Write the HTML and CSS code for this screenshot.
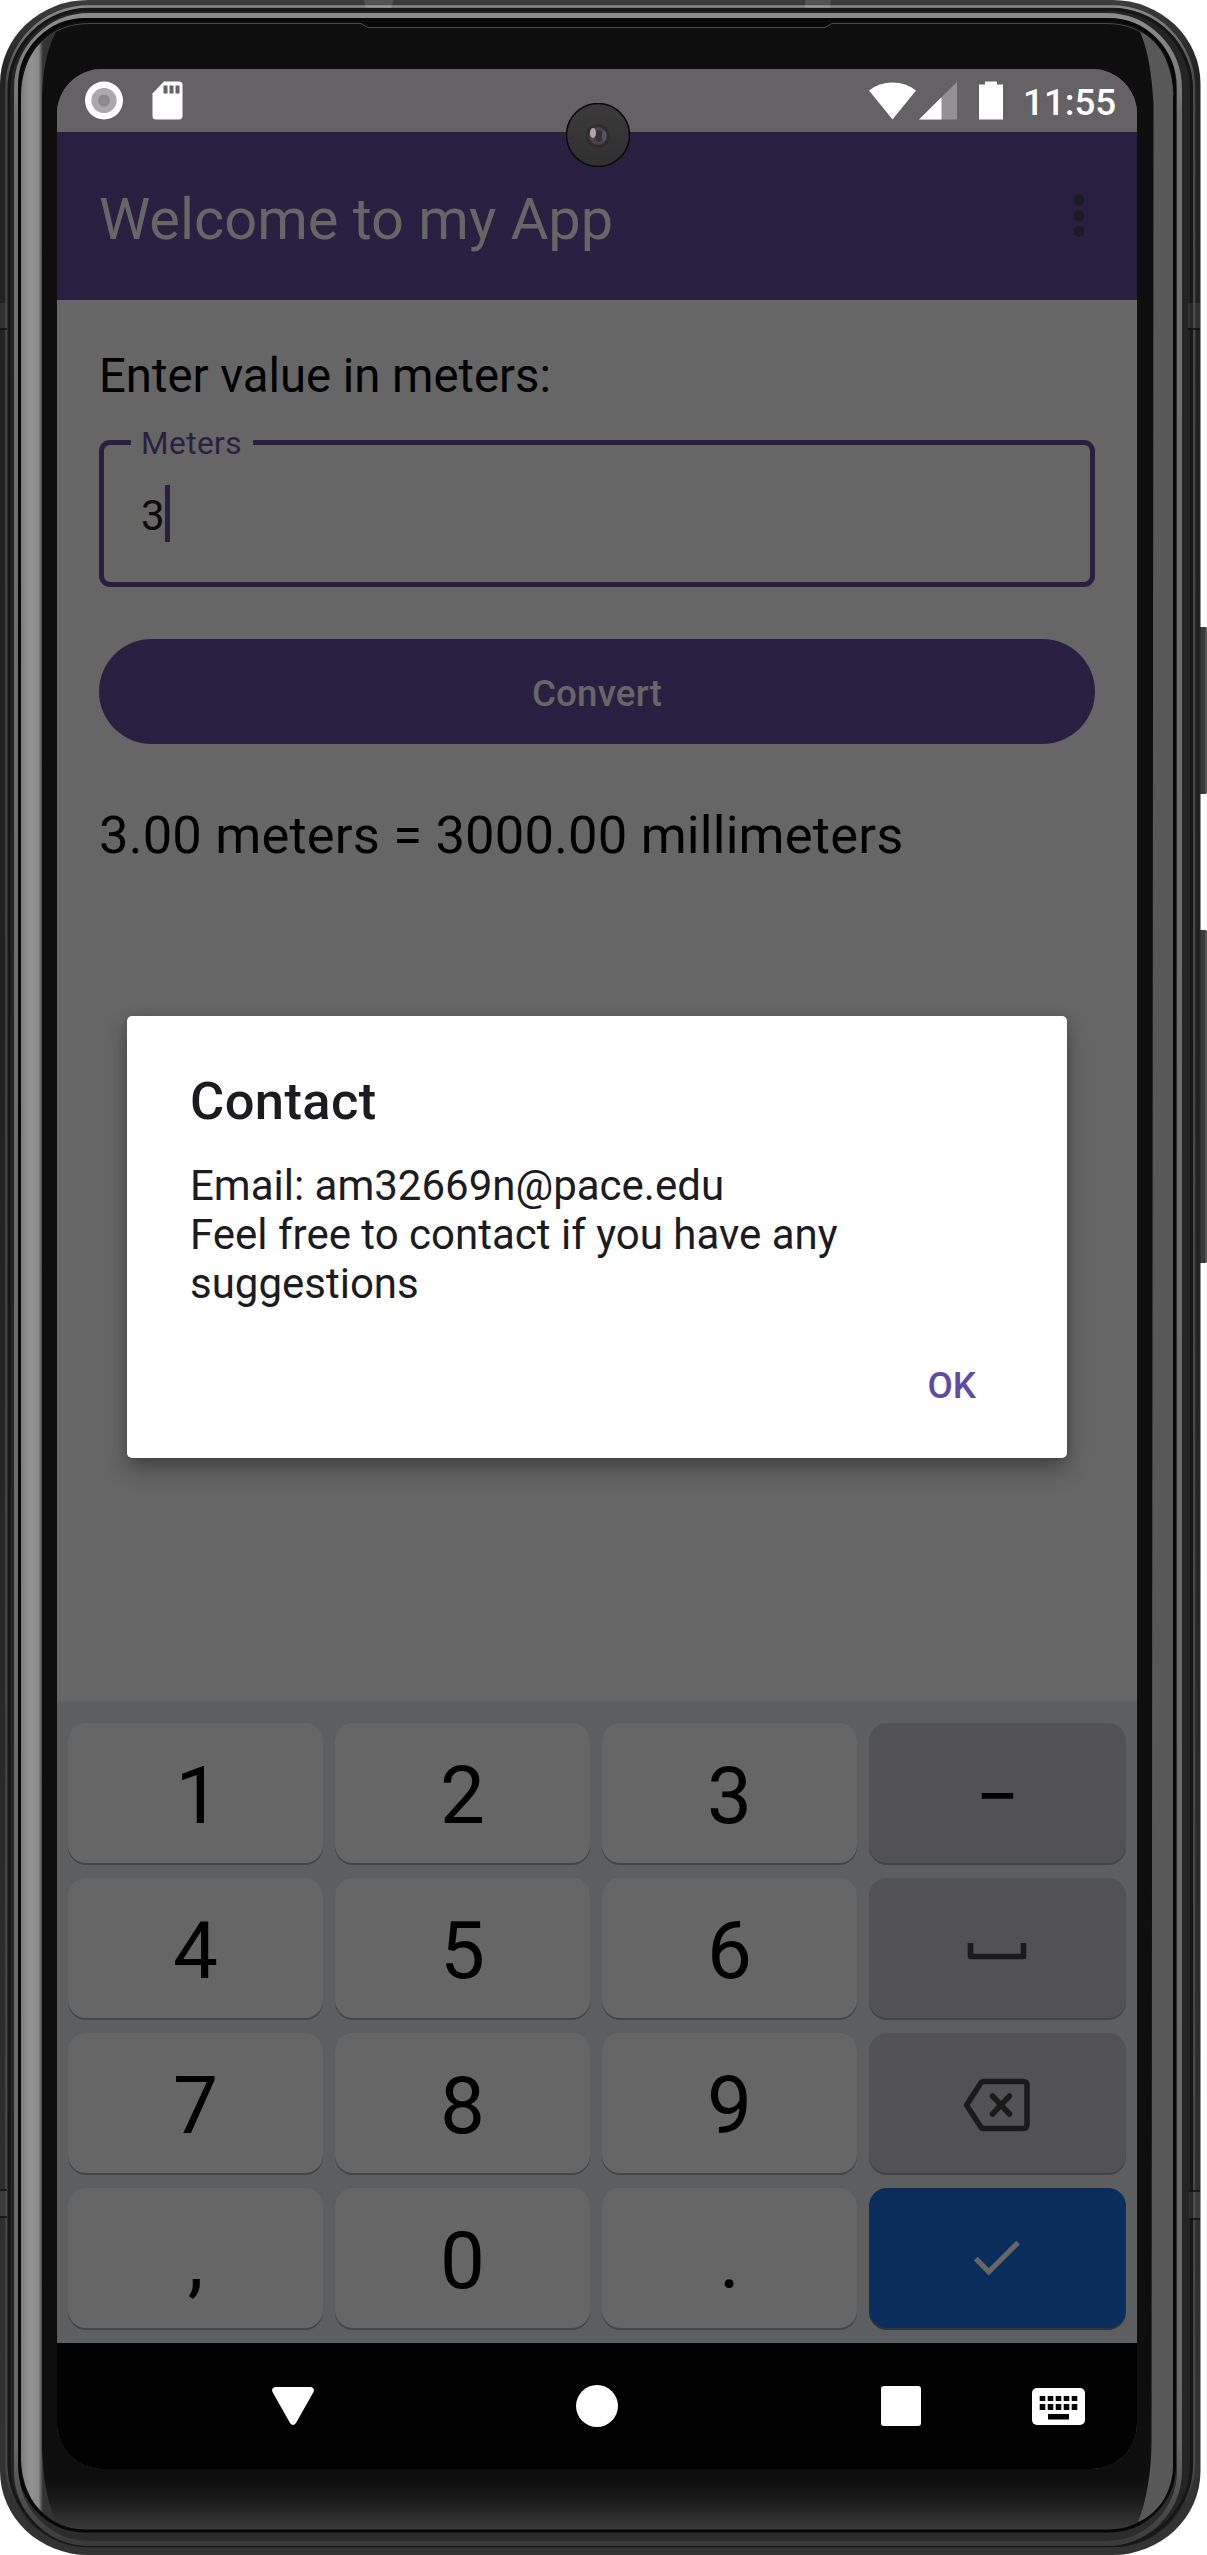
FILE: index.html
```html
<!DOCTYPE html>
<html lang="en">
<head>
<meta charset="utf-8">
<title>Welcome to my App</title>
<link rel="stylesheet" href="styles.css">
</head>
<body>
<div class="phone">
  <svg class="frame" viewBox="0 0 1207 2555" aria-hidden="true">
    <defs>
      <linearGradient id="edge" x1="0" y1="0" x2="0" y2="1"><stop offset="0" stop-color="#3c3c3c"/><stop offset=".03" stop-color="#222"/><stop offset=".4" stop-color="#202020"/><stop offset="1" stop-color="#333"/></linearGradient>
      <linearGradient id="ridge" x1="0" y1="0" x2="0" y2="1"><stop offset="0" stop-color="#8a8a8a"/><stop offset=".03" stop-color="#484848"/><stop offset=".97" stop-color="#484848"/><stop offset="1" stop-color="#161616"/></linearGradient>
      <linearGradient id="rim" x1="0" y1="0" x2="0" y2="1"><stop offset="0" stop-color="#8c8c8c"/><stop offset=".04" stop-color="#707070"/><stop offset=".96" stop-color="#686868"/><stop offset="1" stop-color="#3a3a3a"/></linearGradient>
      <linearGradient id="glass" x1="0" y1="22" x2="0" y2="2530" gradientUnits="userSpaceOnUse"><stop offset="0" stop-color="#0e0e0e"/><stop offset=".979" stop-color="#0e0e0e"/><stop offset=".988" stop-color="#191919"/><stop offset="1" stop-color="#3b3b3b"/></linearGradient>
      <linearGradient id="left" x1="21" y1="0" x2="43" y2="0" gradientUnits="userSpaceOnUse"><stop offset="0" stop-color="#7c7c7c"/><stop offset=".4" stop-color="#929292"/><stop offset=".8" stop-color="#8a8a8a"/><stop offset="1" stop-color="#333"/></linearGradient>
      <linearGradient id="lens" x1="0" y1="0" x2="0" y2="1"><stop offset="0" stop-color="#3a3a3a"/><stop offset="1" stop-color="#303030"/></linearGradient>
    </defs>
    <rect x="1195" y="627" width="12" height="167" rx="2" fill="#3a3a3a"/>
    <rect x="1195" y="930" width="12" height="333" rx="2" fill="#3a3a3a"/>
    <path d="M1206 629V792M1206 932V1261" stroke="#777"/>
    <rect width="1200.5" height="2555" rx="88" ry="84" fill="url(#edge)"/>
    <rect x="6.500" y="6.500" width="1187.500" height="2539.500" rx="82" fill="#242424" stroke="url(#ridge)" stroke-width="2.500"/>
    <rect x="9" y="9.500" width="1182.500" height="2535" rx="80" fill="none" stroke="#161616" stroke-width="3"/>
    <rect x="16.500" y="15.500" width="1163" height="2528" rx="73" fill="#2c2c2c" stroke="url(#rim)" stroke-width="5"/>
    <rect x="19.500" y="19.500" width="1155" height="2511.500" rx="66" fill="url(#glass)" stroke="#070707" stroke-width="3"/>
    <path d="M22 95C23 52 48 23.500 90 23.500H361L368 27.500H825L832 23.500H1106C1148 23.500 1171 52 1173 95" fill="none" stroke="#4a4a4a"/>
    <path d="M363 22H829L823 26.500H370Z" fill="#070707"/>
    <path d="M56 32C36 41 22 63 21 95V2460C22 2490 36 2512 56 2521C46 2500 42 2470 42 2440V105C42 75 46 50 56 32Z" fill="url(#left)"/>
    <path d="M1140 32C1160 41 1172 63 1173 95V2465C1173 2490 1160 2513 1138 2522C1147 2500 1151.500 2470 1151.500 2440L1153.500 105C1152 75 1148 50 1140 32Z" fill="#585858"/>
    <path d="M364 0H394L391 8H366ZM805 0H831L830 8H805Z" fill="#fff" fill-opacity=".12"/>
    <path d="M0 303H7V328H0ZM1188 303H1200V328H1188ZM0 2190H7V2217H0ZM1189 2191H1200V2219H1189Z" fill="#555" fill-opacity=".3"/>
    <path d="M0 329H7M1188 329H1200M0 2190H7M0 2217H7M1189 2191H1200M1189 2219H1200" stroke="#101010" stroke-width="1.500"/>
  </svg>

  <div class="screen">
    <header class="status">
      <svg width="38" height="39" viewBox="0 0 38 39"><circle cx="19" cy="19.500" r="19" fill="#fff"/><circle cx="19" cy="19.500" r="12.600" fill="#aba9ab"/><circle cx="19" cy="19.500" r="6" fill="#8c8a8c"/></svg>
      <svg class="sd" width="31" height="39" viewBox="0 0 31 39"><path d="M12 .5H27Q30.500 .5 30.500 4V35Q30.500 38.500 27 38.500H4Q.5 38.500 .5 35V12.500Z" fill="#fff"/><path d="M11.500 4.500H15.500V12.500H11.500ZM17.500 4.500H21.500V12.500H17.500ZM23.500 4.500H27.500V12.500H23.500Z" fill="#656265"/></svg>
      <svg class="wifi" width="47" height="38" viewBox="0 0 47 38"><path d="M0 8.500Q10 .5 23.500 .5T47 8.500L23.500 37.500Z" fill="#fff"/></svg>
      <svg class="signal" width="38" height="38" viewBox="0 0 38 38"><path d="M38 0V37.500H0Z" fill="#949194"/><path d="M22.500 15.300V37.500H0Z" fill="#fff"/></svg>
      <svg class="battery" width="24" height="39" viewBox="0 0 24 39"><path d="M6 .5H18V3.500H24V38.500H0V3.500H6Z" fill="#fff"/></svg>
      <span class="clock">11:55</span>
    </header>

    <div class="appbar">
      <h1>Welcome to my App</h1>
      <svg width="12" height="44" viewBox="0 0 12 44"><g fill="#1c1b1f"><circle cx="6" cy="6" r="5.400"/><circle cx="6" cy="21.800" r="5.400"/><circle cx="6" cy="37.500" r="5.400"/></g></svg>
    </div>

    <main class="content">
      <p class="prompt">Enter value in meters:</p>
      <div class="field"><span class="legend">Meters</span><span class="value">3</span><i class="caret"></i></div>
      <button class="convert">Convert</button>
      <p class="result">3.00 meters = 3000.00 millimeters</p>
    </main>

    <div class="keys">
      <span class="key one">1</span><span class="key">2</span><span class="key">3</span><span class="key alt minus">−</span>
      <span class="key">4</span><span class="key">5</span><span class="key">6</span>
      <span class="key alt"><svg width="60" height="18" viewBox="0 0 60 18"><path d="M3.500 1V14.500H56.500V1" fill="none" stroke="#1a1a1a" stroke-width="5.600" stroke-linejoin="round"/></svg></span>
      <span class="key">7</span><span class="key">8</span><span class="key">9</span>
      <span class="key alt"><svg class="del" width="68" height="54" viewBox="0 0 68 54"><g fill="none" stroke="#1a1a1a" stroke-width="5.500" stroke-linejoin="round" stroke-linecap="round"><path d="M20.500 3.500H60Q64 3.500 64 7.500V46.500Q64 50.500 60 50.500H20.500Q18.500 50.500 17.500 48.500L3.500 27L17.500 5.500Q18.500 3.500 20.500 3.500Z"/><path d="M29.500 18L46.500 36M46.500 18L29.500 36"/></g></svg></span>
      <span class="key">,</span><span class="key">0</span><span class="key">.</span>
      <span class="key enter"><svg width="46" height="36" viewBox="0 0 46 36"><path d="M1.800 18.500L14.800 31.800L44 2.500" fill="none" stroke="#666" stroke-width="5.200"/></svg></span>
    </div>

    <nav class="nav">
      <svg class="back" width="42" height="38" viewBox="0 0 42 38"><path d="M3 0H39Q43 1 41.500 5L24 36Q21 40 18 36L.5 5Q-1 1 3 0Z" fill="#fff"/></svg>
      <svg class="home" width="42" height="42" viewBox="0 0 42 42"><circle cx="21" cy="21" r="21" fill="#fff"/></svg>
      <svg class="recent" width="40" height="40" viewBox="0 0 40 40"><rect width="40" height="40" rx="3" fill="#fff"/></svg>
      <svg class="ime" width="53" height="37" viewBox="0 0 53 37"><rect width="53" height="37" rx="5" fill="#fff"/><path d="M10.500 8V22M18.500 8V22M26.500 8V22M34.500 8V22M42.500 8V22" stroke="#000" stroke-width="5.600"/><path d="M6 14.500H47" stroke="#fff" stroke-width="3"/><path d="M16 26H37V31.500H16Z"/></svg>
    </nav>

    <section class="dialog">
      <h2>Contact</h2>
      <p>Email: am32669n@pace.edu<br>Feel free to contact if you have any suggestions</p>
      <button class="ok">OK</button>
    </section>

    <svg class="camera" width="64" height="64" viewBox="0 0 64 64"><circle cx="32" cy="32" r="31.500" fill="url(#lens)" stroke="#080808" stroke-width="1.500"/><circle cx="32" cy="33" r="12" fill="#2f2c2e"/><circle cx="32" cy="33" r="9" fill="#4c4348"/><ellipse cx="33" cy="33" rx="4" ry="6" fill="#3a3138"/><ellipse cx="27" cy="30" rx="3" ry="5" fill="#b3a5ae"/><ellipse cx="38" cy="33" rx="2" ry="5" fill="#4f5670"/></svg>
  </div>
</div>
</body>
</html>
```
FILE: styles.css
```css
* { box-sizing: border-box; }
body { margin: 0; background: #fff; font-family: Roboto, sans-serif; }
h1, h2, p { margin: 0; font-weight: 400; white-space: nowrap; }
button { border: 0; padding: 0; background: none; font: inherit; display: block; }
svg { display: block; flex: none; }

.phone { position: relative; width: 1207px; height: 2555px; padding: 69px 70px 86px 57px; overflow: hidden; }
.frame { position: absolute; inset: 0; width: 1207px; height: 2555px; }
.screen { position: relative; width: 1080px; height: 2400px; border-radius: 45px; background: #666; display: flex; flex-direction: column; }

.status { height: 63px; flex: none; display: flex; align-items: flex-start; padding: 12px 0 0 28px; background: #656265; border-radius: 45px 45px 0 0; }
.sd { margin-left: 29px; }
.wifi { margin: 1px 0 0 686px; }
.signal { margin: 1px 0 0 3px; }
.battery { margin-left: 22px; }
.clock { margin-left: 20px; font-size: 36.75px; font-weight: 500; line-height: 43px; color: #fff; }

.appbar { height: 168px; flex: none; display: flex; align-items: center; justify-content: space-between; padding: 0 52px 0 42px; background: #292041; }
.appbar h1 { font-size: 57.75px; line-height: 68px; padding-top: 6px; color: #666; }

.content { flex: 1; padding: 48px 42px 0; color: #000; }
.prompt { font-size: 47.25px; line-height: 56px; }
.field { position: relative; height: 147px; margin-top: 36px; border: 5px solid #292041; border-radius: 11px; display: flex; align-items: center; padding: 0 37px; }
.legend { position: absolute; left: 27px; top: -20px; padding: 0 11px 0 10px; font-size: 31.5px; line-height: 38px; letter-spacing: .015em; color: #292041; background: #666; }
.value { font-size: 42px; line-height: 48px; padding-top: 4px; color: #0b0b0c; }
.caret { width: 5px; height: 57px; margin-left: 0; background: #292041; }
.convert { width: 100%; height: 105px; margin-top: 52px; padding-top: 4px; border-radius: 53px; background: #292041; color: #666; font-size: 36.75px; font-weight: 500; letter-spacing: .15px; }
.result { margin-top: 60px; font-size: 52.5px; line-height: 62px; letter-spacing: .17px; }

.keys { flex: none; height: 641px; padding: 21px 11px 0; display: grid; grid-template-columns: 255px 255px 255px 256.500px; grid-auto-rows: 140px; gap: 15px 12px; background: #5c5e60; box-shadow: 0 -2px 3px rgba(0, 0, 0, .06); }
.key { display: flex; align-items: center; justify-content: center; border-radius: 18px; background: #666; box-shadow: 0 2px 0 #444; font-size: 80px; line-height: 94px; padding-top: 5px; color: #000; }
.one { padding-left: 5px; }
.alt { background: #525254; box-shadow: 0 2px 0 #434345; }
.minus { font-size: 77px; padding-top: 7px; }
.del { margin-top: -2px; }
.enter { background: #0a2d5c; box-shadow: 0 2px 0 #333436; }
.enter svg { margin-top: -5px; }

.nav { flex: none; height: 126px; display: flex; align-items: center; padding-left: 215px; background: #000; border-radius: 0 0 45px 45px; }
.home { margin-left: 262px; }
.recent { margin-left: 263px; }
.ime { margin-left: 111px; }

.dialog { position: absolute; left: 70px; top: 947px; width: 940px; height: 442px; padding: 54px 63px; border-radius: 5px; background: #fff; color: #1c1b1f; box-shadow: 0 12px 22px rgba(0, 0, 0, .3), 0 0 10px rgba(0, 0, 0, .15); }
.dialog h2 { font-size: 52.5px; line-height: 62px; font-weight: 500; letter-spacing: .4px; }
.dialog p { margin-top: 29px; font-size: 42px; line-height: 49px; white-space: normal; }
.ok { margin: 56px 28px 0 auto; font-size: 36.75px; line-height: 44px; font-weight: 500; color: #5f4ba0; }

.camera { position: absolute; left: 509px; top: 34px; }
```
